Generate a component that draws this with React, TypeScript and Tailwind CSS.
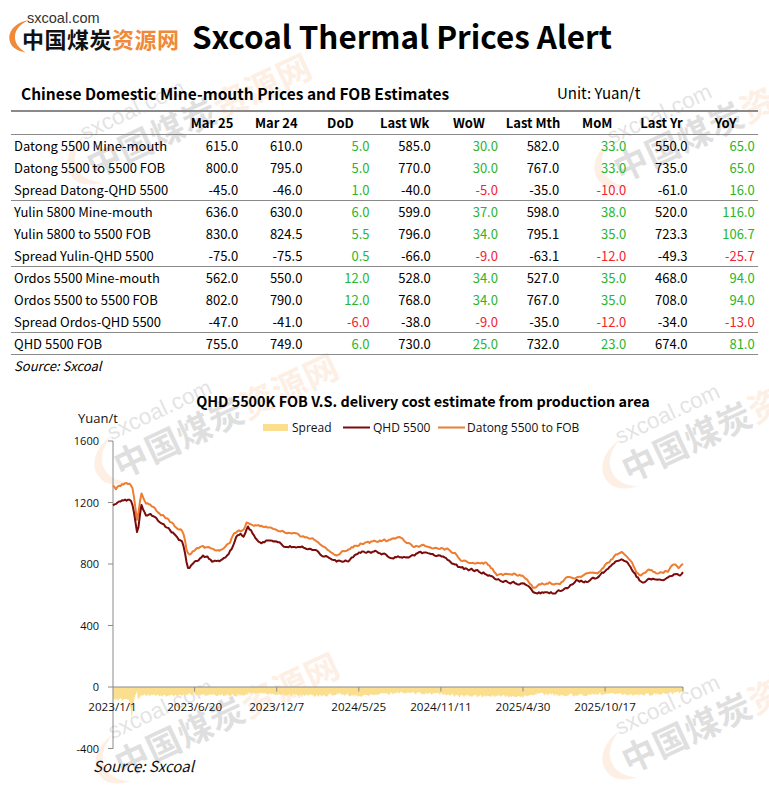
import React from "react";

type Pt = [number, number];

function rng(seed: number) {
  let s = seed >>> 0;
  return () => {
    s = (Math.imul(s, 1664525) + 1013904223) >>> 0;
    return s / 4294967296;
  };
}

function interp(pts: Pt[], x: number) {
  for (let i = 0; i < pts.length - 1; i++) {
    const [x0, y0] = pts[i];
    const [x1, y1] = pts[i + 1];
    if (x >= x0 && x <= x1) return y0 + ((y1 - y0) * (x - x0)) / (x1 - x0 || 1);
  }
  return pts[pts.length - 1][1];
}

function linePath(pts: Pt[], seed: number, amp: number) {
  const r = rng(seed);
  let n = 0;
  const parts: string[] = [];
  for (let x = 113; x <= 683.01; x += 1.5) {
    n = n * 0.5 + (r() - 0.5) * amp;
    const y = interp(pts, x) + n;
    parts.push(`${x.toFixed(1)},${y.toFixed(1)}`);
  }
  return "M" + parts.join("L");
}

const orangePts: Pt[] = [
  [113, 486], [116, 490], [119, 486], [124, 484], [130, 484], [133, 490], [135, 505], [137, 520], [139, 510], [141, 492],
  [143, 498], [146, 503], [152, 507], [160, 513], [168, 520], [175, 526], [180, 529], [183, 532], [185, 540], [187, 553],
  [190, 555], [194, 551], [198, 549], [202, 546], [207, 548], [214, 550], [220, 551], [226, 547], [230, 542], [234, 534],
  [238, 531], [243, 530], [247, 522], [252, 526], [258, 524], [264, 527], [270, 528], [278, 530], [285, 532], [292, 534],
  [300, 536], [308, 537], [315, 540], [320, 545], [326, 548], [330, 552], [336, 555], [342, 552], [348, 550], [355, 546],
  [362, 543], [370, 542], [378, 541], [385, 541], [392, 540], [400, 538], [407, 543], [414, 546], [420, 546], [430, 547],
  [440, 548], [450, 550], [458, 556], [462, 560], [470, 563], [480, 563], [487, 563], [493, 570], [498, 575], [505, 574],
  [515, 574], [523, 575], [528, 580], [533, 588], [540, 584], [550, 583], [560, 583], [566, 579], [572, 577], [580, 577],
  [586, 575], [593, 572], [600, 572], [605, 566], [610, 562], [615, 555], [620, 552], [624, 553], [628, 558], [632, 563],
  [636, 572], [640, 576], [646, 571], [650, 570], [656, 572], [662, 572], [668, 571], [673, 563], [676, 565], [679, 568],
  [683, 563],
];

const redPts: Pt[] = [
  [113, 506], [116, 504], [119, 501], [124, 500], [130, 500], [133, 506], [135, 520], [137, 533], [139, 525], [141, 505],
  [143, 510], [146, 515], [150, 513], [155, 518], [160, 522], [166, 527], [172, 532], [178, 538], [182, 542], [184, 548],
  [186, 560], [188, 568], [191, 566], [194, 563], [198, 561], [203, 557], [208, 558], [214, 562], [220, 561], [226, 556],
  [230, 551], [234, 544], [237, 535], [240, 533], [244, 537], [248, 527], [252, 532], [256, 538], [260, 543], [265, 542],
  [270, 540], [278, 543], [285, 546], [293, 547], [300, 547], [310, 548], [316, 550], [322, 555], [327, 557], [332, 560],
  [337, 562], [343, 561], [350, 560], [355, 556], [360, 552], [368, 552], [377, 552], [385, 555], [393, 557], [400, 557],
  [410, 557], [420, 553], [430, 555], [443, 557], [452, 563], [460, 568], [470, 570], [477, 570], [487, 574], [497, 580],
  [505, 582], [515, 583], [527, 585], [533, 592], [540, 593], [548, 593], [555, 593], [562, 590], [567, 588], [572, 584],
  [577, 580], [582, 581], [587, 582], [592, 579], [597, 577], [603, 573], [610, 568], [615, 563], [620, 560], [625, 561],
  [628, 563], [632, 570], [637, 577], [641, 582], [645, 582], [649, 579], [653, 578], [658, 580], [663, 580], [668, 577],
  [673, 575], [677, 573], [680, 576], [683, 572],
];

const spreadPts: Pt[] = [
  [113, 11], [118, 13], [124, 12], [129, 12], [131, 25], [132, 31], [133, 18], [135, 10], [137, 3], [138, 14], [140, 9],
  [150, 8], [170, 9], [190, 7], [200, 8], [220, 8], [240, 8], [260, 6], [280, 8], [300, 8], [320, 9], [340, 7], [360, 9],
  [380, 7], [400, 6], [420, 6], [440, 7], [460, 9], [480, 9], [500, 9], [520, 10], [540, 7], [560, 8], [580, 8], [600, 7],
  [620, 7], [640, 8], [660, 7], [683, 5],
];

function areaPath() {
  const r = rng(7);
  const parts: string[] = ["M113,687"];
  for (let x = 113; x <= 683; x += 1) {
    const d = interp(spreadPts, x) + (r() - 0.5) * 3;
    parts.push(`L${x},${(687 + Math.max(1, d)).toFixed(1)}`);
  }
  parts.push("L683,687Z");
  return parts.join("");
}

const ORANGE_D = linePath(orangePts, 11, 2.2);
const RED_D = linePath(redPts, 23, 2.2);
const AREA_D = areaPath();

const rows: string[][] = [
  ["Datong 5500 Mine-mouth", "615.0", "610.0", "5.0", "585.0", "30.0", "582.0", "33.0", "550.0", "65.0"],
  ["Datong 5500 to 5500 FOB", "800.0", "795.0", "5.0", "770.0", "30.0", "767.0", "33.0", "735.0", "65.0"],
  ["Spread Datong-QHD 5500", "-45.0", "-46.0", "1.0", "-40.0", "-5.0", "-35.0", "-10.0", "-61.0", "16.0"],
  ["Yulin 5800 Mine-mouth", "636.0", "630.0", "6.0", "599.0", "37.0", "598.0", "38.0", "520.0", "116.0"],
  ["Yulin 5800 to 5500 FOB", "830.0", "824.5", "5.5", "796.0", "34.0", "795.1", "35.0", "723.3", "106.7"],
  ["Spread Yulin-QHD 5500", "-75.0", "-75.5", "0.5", "-66.0", "-9.0", "-63.1", "-12.0", "-49.3", "-25.7"],
  ["Ordos 5500 Mine-mouth", "562.0", "550.0", "12.0", "528.0", "34.0", "527.0", "35.0", "468.0", "94.0"],
  ["Ordos 5500 to 5500 FOB", "802.0", "790.0", "12.0", "768.0", "34.0", "767.0", "35.0", "708.0", "94.0"],
  ["Spread Ordos-QHD 5500", "-47.0", "-41.0", "-6.0", "-38.0", "-9.0", "-35.0", "-12.0", "-34.0", "-13.0"],
  ["QHD 5500 FOB", "755.0", "749.0", "6.0", "730.0", "25.0", "732.0", "23.0", "674.0", "81.0"],
];

const headers = ["Mar 25", "Mar 24", "DoD", "Last Wk", "WoW", "Last Mth", "MoM", "Last Yr", "YoY"];

function Logo() {
  return (
    <div className="relative flex flex-col w-[172px] h-[44px]">
      <svg className="absolute left-0 top-0" width="40" height="44" viewBox="0 0 40 44">
        <path
          d="M21,9 C9,11 0,19 1.5,29 C2.5,36 9,40 18,41.5 C11,37.5 6.5,32 7,25 C7.5,18 13,12.5 21,9 Z"
          fill="#f08a3a"
        />
      </svg>
      <div className="relative ml-[19px] text-[14.5px] leading-[14px] text-[#333] font-['Liberation_Sans',sans-serif]">
        sxcoal.com
      </div>
      <div className="relative ml-[14px] mt-[2px] text-[22px] leading-[22px] font-bold tracking-[0.5px]">
        <span className="text-[#111]">中国煤炭</span>
        <span className="text-[#f08a3a]">资源网</span>
      </div>
    </div>
  );
}

function Watermark({ className }: { className: string }) {
  return (
    <div className={className}>
      <Logo />
    </div>
  );
}

function ValueCell({ v, idx }: { v: string; idx: number }) {
  const colored = idx === 2 || idx === 4 || idx === 6 || idx === 8;
  if (!colored) return <div className="text-right pr-[6px]">{v}</div>;
  const neg = v.startsWith("-");
  return <div className={neg ? "text-right pr-[3px] text-[#f5222d]" : "text-right pr-[3px] text-[#2bb52b]"}>{v}</div>;
}

function Chart() {
  const yTicks = [1600, 1200, 800, 400, 0, -400];
  const xTicks: [number, string][] = [
    [112.5, "2023/1/1"],
    [194.6, "2023/6/20"],
    [276.7, "2023/12/7"],
    [358.8, "2024/5/25"],
    [440.9, "2024/11/11"],
    [523, "2025/4/30"],
    [605.1, "2025/10/17"],
  ];
  return (
    <svg width="769" height="385" viewBox="0 410 769 385" className="block font-['Open_Sans',sans-serif]">
      {/* legend */}
      <rect x="263" y="424" width="25" height="7" fill="#fbdf8e" />
      <text x="292" y="432" fontSize="12" fill="#111">Spread</text>
      <line x1="343" y1="427.5" x2="370" y2="427.5" stroke="#7b0a0a" strokeWidth="2" />
      <text x="373" y="432" fontSize="12" fill="#111">QHD 5500</text>
      <line x1="438" y1="427.5" x2="465" y2="427.5" stroke="#ed7d31" strokeWidth="2" />
      <text x="467" y="432" fontSize="12" fill="#111">Datong 5500 to FOB</text>

      <text x="78" y="423" fontSize="13" fill="#111">Yuan/t</text>

      {/* spread area */}
      <path d={AREA_D} fill="#fbdf8e" />

      {/* axes */}
      <line x1="113" y1="441" x2="113" y2="748.5" stroke="#8a8a8a" strokeWidth="1" />
      {yTicks.map((v) => {
        const y = 687 - v * 0.15375;
        return (
          <g key={v}>
            <line x1="108" y1={y} x2="113" y2={y} stroke="#8a8a8a" strokeWidth="1" />
            <text x="99" y={y + 4} fontSize="11" textAnchor="end" fill="#111">
              {v}
            </text>
          </g>
        );
      })}
      <line x1="113" y1="687" x2="683" y2="687" stroke="#8a8a8a" strokeWidth="1" />
      {xTicks.map(([x, label]) => (
        <g key={label}>
          {x > 113 && <line x1={x} y1="687" x2={x} y2="691.5" stroke="#8a8a8a" strokeWidth="1" />}
          <text x={x} y="710.5" fontSize="11.6" textAnchor="middle" fill="#111">
            {label}
          </text>
        </g>
      ))}
      <line x1="683" y1="687" x2="683" y2="691.5" stroke="#8a8a8a" strokeWidth="1" />

      {/* lines */}
      <path d={ORANGE_D} fill="none" stroke="#ed7d31" strokeWidth="2" strokeLinejoin="round" />
      <path d={RED_D} fill="none" stroke="#7b0a0a" strokeWidth="2" strokeLinejoin="round" />

      <text
        x="93"
        y="772"
        fontSize="15"
        fontStyle="italic"
        fill="#111"
        className="font-['Noto_Sans_CJK_SC',sans-serif]"
      >
        Source: Sxcoal
      </text>
    </svg>
  );
}

export default function App() {
  return (
    <div className="relative w-[769px] h-[795px] overflow-hidden bg-white text-black font-['Noto_Sans_CJK_SC','Noto_Sans',sans-serif]">
      {/* watermarks */}
      <Watermark className="absolute left-[50px] top-[136px] origin-top-left rotate-[-25deg] scale-[1.55] opacity-[0.13] pointer-events-none" />
      <Watermark className="absolute left-[577px] top-[140px] origin-top-left rotate-[-25deg] scale-[1.55] opacity-[0.13] pointer-events-none" />
      <Watermark className="absolute left-[77px] top-[436px] origin-top-left rotate-[-25deg] scale-[1.55] opacity-[0.13] pointer-events-none" />
      <Watermark className="absolute left-[585px] top-[440px] origin-top-left rotate-[-25deg] scale-[1.55] opacity-[0.13] pointer-events-none" />
      <Watermark className="absolute left-[78px] top-[735px] origin-top-left rotate-[-25deg] scale-[1.55] opacity-[0.13] pointer-events-none" />
      <Watermark className="absolute left-[585px] top-[731px] origin-top-left rotate-[-25deg] scale-[1.55] opacity-[0.13] pointer-events-none" />

      <div className="relative">
        {/* header */}
        <div className="flex items-start h-[83px]">
          <div className="ml-[8px] mt-[11px]">
            <Logo />
          </div>
          <div className="ml-[12px] mt-[20px] text-[31.4px] leading-[32px] font-bold text-black">
            Sxcoal Thermal Prices Alert
          </div>
        </div>

        {/* section title */}
        <div className="flex items-center h-[20px]">
          <div className="w-[557px] pl-[21px] text-[15.5px] leading-[20px] font-bold">
            Chinese Domestic Mine-mouth Prices and FOB Estimates
          </div>
          <div className="text-[15px] leading-[20px]">Unit: Yuan/t</div>
        </div>

        {/* table */}
        <div className="mt-[7px] ml-[11px] w-[747px] text-[13px] leading-[16px]">
          <div className="grid grid-cols-[169px_repeat(9,64.2px)] items-center h-[25px] border-t-2 border-b-[1.5px] border-[#8a8a8a] font-bold">
            <div />
            {headers.map((h) => (
              <div key={h} className="text-center">
                {h}
              </div>
            ))}
          </div>
          {rows.map((r, i) => (
            <div
              key={r[0]}
              className={
                i === 2 || i === 5 || i === 8 || i === 9
                  ? "grid grid-cols-[169px_repeat(9,64.2px)] items-center h-[22px] border-b-[1.5px] border-[#8a8a8a]"
                  : "grid grid-cols-[169px_repeat(9,64.2px)] items-center h-[22px]"
              }
            >
              <div className="pl-[3px] whitespace-nowrap">{r[0]}</div>
              {r.slice(1).map((v, j) => (
                <ValueCell key={j} v={v} idx={j} />
              ))}
            </div>
          ))}
          <div className="mt-[3px] pl-[3px] italic text-[13px] leading-[16px]">Source: Sxcoal</div>
        </div>

        {/* chart title */}
        <div className="mt-[18px] h-[18px] pl-[77px] text-center text-[14.4px] leading-[18px] font-bold">
          QHD 5500K FOB V.S. delivery cost estimate from production area
        </div>

        <Chart />
      </div>
    </div>
  );
}
